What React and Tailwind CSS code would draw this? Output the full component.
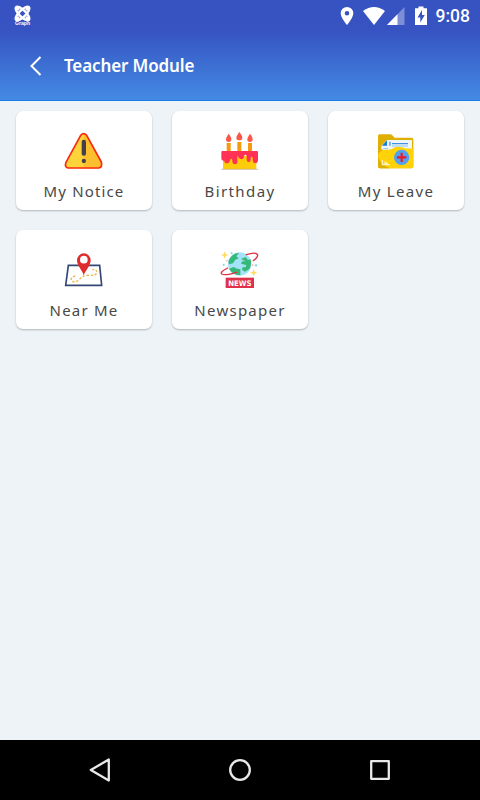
import React from 'react';

function NoticeIcon() {
  return (
    <svg className="h-10 w-10" viewBox="42 33 120 120">
      <path d="M90 47Q101 36 112 47L154 125Q160 142 147 145H54Q42 142 48 126Z" fill="#ffd43b" />
      <path d="M101 41Q108 41 112 47L154 125Q160 142 147 145H101Z" fill="#fcbf2d" />
      <path d="M92 46Q101 36 110 46L154 126Q158 142 147 144H54Q43 142 48 127Z" fill="none" stroke="#f92a13" strokeWidth="5" strokeLinejoin="round" />
      <rect x="95" y="59" width="13" height="48" rx="6" fill="#44414a" />
      <circle cx="101.500" cy="123" r="6.500" fill="#44414a" />
    </svg>
  );
}

function BirthdayIcon() {
  return (
    <svg className="h-10 w-10" viewBox="45 33 120 120">
      <path d="M65 69h12v28H65zM97 66h12v31H97zM129 69h12v28h-12z" fill="#f59a0c" />
      <path d="M71 41C77 49 79 53 79 58a8 8 0 0 1-16 0C63 53 66 49 71 41ZM103 36C109 44 112 49 112 53a9 8 0 0 1-18 0C94 48 98 44 103 36ZM135 41C141 49 143 53 143 58a8 8 0 0 1-16 0C127 53 130 49 135 41Z" fill="#fa5746" />
      <path d="M54 108H154V148H54Z" fill="#ffcc0a" />
      <path d="M52 93H156Q159 93 159 97V119Q159 129 151 129T143 119V114Q140 107 137 114V119Q137 126 131 126T125 119V108Q122 101 117 108V111Q115 119 107 117T99 108Q97 106 97 112V126Q97 133 90 133T82 126V120Q79 112 75 120Q74 130 66 130T58 122Q49 123 49 114V97Q49 93 52 93Z" fill="#ff3154" />
      <path d="M48 148H160" stroke="#b7aba4" strokeWidth="2" />
    </svg>
  );
}

function LeaveIcon() {
  return (
    <svg className="h-10 w-10" viewBox="48 33 120 120">
      <path d="M58 43H91Q96 43 99 48L104 53H154Q160 53 160 59V139Q160 145 154 145H60Q54 145 54 139V48Q54 43 58 43Z" fill="#deb006" />
      <path d="M64 88V78L81 60H156V100H100Z" fill="#edf6fb" />
      <path d="M66 77L81 61V77Z" fill="#147bd8" />
      <path d="M90 65V77M96 71H144" stroke="#4492df" strokeWidth="4" />
      <path d="M70 86H84M96 78H144" stroke="#91c6ec" strokeWidth="3" />
      <path d="M54 104Q62 88 80 89Q94 90 102 83Q112 78 126 82Q142 88 160 84V139Q160 145 154 145H60Q54 145 54 139Z" fill="#ffd20a" />
      <path d="M54 104Q56 132 90 145H60Q54 145 54 139Z" fill="#deb006" />
      <path d="M67 120V134H90M73 126H79M73 130H84" fill="none" stroke="#fff4bd" strokeWidth="3.500" />
      <circle cx="125" cy="112" r="23" fill="#51a1f0" />
      <path d="M125 98V126M111 112H139" stroke="#ef1628" strokeWidth="6.500" />
    </svg>
  );
}

function NearIcon() {
  return (
    <svg className="h-10 w-10" viewBox="42 30 120 120">
      <path d="M55 76H149L155 136H47Z" fill="white" stroke="#354875" strokeWidth="5" />
      <path d="M76 108Q61 111 64 122Q74 130 88 119Q97 107 112 106Q137 108 141 98Q140 87 127 89" fill="none" stroke="#edb94b" strokeWidth="4" strokeDasharray="7 5" />
      <path d="M101 107C98 91 81 78 81 61A20.500 21 0 0 1 122 61C122 78 106 91 101 107Z" fill="#df2b2c" />
      <circle cx="101.500" cy="59" r="11.500" fill="white" />
    </svg>
  );
}

function NewsIcon() {
  return (
    <svg className="h-10 w-10" viewBox="45 30 120 120">
      <circle cx="104" cy="72" r="35" fill="#a3e2f7" />
      <path d="M76 53Q87 38 102 39L94 49L101 55L91 59L84 70L72 73Q68 62 76 53ZM108 57L122 51L129 60L137 58Q141 74 133 87L120 95L111 89L113 82L123 81V75L108 71L112 64L122 64ZM72 86L86 81L96 86L106 88V105Q84 106 72 86Z" fill="#35b878" />
      <path d="M124 44Q154 34 158 45Q159 52 145 62M68 84Q44 96 50 102Q60 108 95 97" fill="none" stroke="#de3446" strokeWidth="4" strokeLinecap="round" />
      <path d="M59 34L62 42L70 45L62 48L59 56L56 48L48 45L56 42ZM146 87L149 95L157 98L149 101L146 109L143 101L135 98L143 95Z" fill="#ffdc5c" />
      <g fill="#82cfe9"><circle cx="80" cy="40" r="3" /><circle cx="153" cy="76" r="3.500" /><circle cx="56" cy="74" r="3" /></g>
      <g fill="#f28d98"><circle cx="66" cy="62" r="2" /><circle cx="143" cy="75" r="2" /></g>
      <rect x="62" y="113" width="85" height="31" fill="#df3149" />
      <text x="104.500" y="137" fill="white" textAnchor="middle" textLength="70" lengthAdjust="spacingAndGlyphs" className="font-['DejaVu_Sans'] text-[23px] font-bold">NEWS</text>
    </svg>
  );
}

const modules = [
  { name: 'My Notice', icon: NoticeIcon, tracking: 'tracking-[1.15px]' },
  { name: 'Birthday', icon: BirthdayIcon, tracking: 'tracking-[1.4px]' },
  { name: 'My Leave', icon: LeaveIcon, tracking: 'tracking-[1.3px]' },
  { name: 'Near Me', icon: NearIcon, tracking: 'tracking-[1.2px]' },
  { name: 'Newspaper', icon: NewsIcon, tracking: 'tracking-[1.25px]' },
];

function StatusBar() {
  return (
    <div className="flex h-8 items-center justify-between pl-[13px] pr-[10px]">
      <svg className="h-[22px] w-5" viewBox="0 0 20 22">
        <g fill="none" stroke="white" strokeWidth="2.400">
          <ellipse cx="9.500" cy="8.500" rx="3.300" ry="9" transform="rotate(45 9.500 8.500)" />
          <ellipse cx="9.500" cy="8.500" rx="3.300" ry="9" transform="rotate(-45 9.500 8.500)" />
        </g>
        <path d="M3 2l3 3M16 2l-3 3M3 15l3-3M16 15l-3-3" stroke="white" strokeWidth="2.500" />
        <text x="9.500" y="20" textAnchor="middle" textLength="15" lengthAdjust="spacingAndGlyphs" fill="white" className="font-['Liberation_Sans'] text-[6px] font-bold">Graph</text>
      </svg>
      <div className="flex items-center">
        <svg className="h-6 w-[90px]" viewBox="340 4 90 24" fill="white">
          <path fillRule="evenodd" d="M347 7A6.300 6.300 0 0 0 340.700 13.300C340.700 18 347 25 347 25S353.300 18 353.300 13.300A6.300 6.300 0 0 0 347 7ZM347 11A2.300 2.300 0 1 1 347 15.600A2.300 2.300 0 0 1 347 11Z" />
          <path d="M363 11Q374 3 385 11L374 25Z" />
          <path d="M404.500 7V25H387Z" opacity=".35" />
          <path d="M397.500 14.200V25H387Z" />
          <path fillRule="evenodd" d="M415 8.300H418.500V6.500H423.500V8.300H427V25H415ZM422 10L417.500 17.500H420.300V22.500L424.800 15H422Z" />
        </svg>
        <span className="ml-[6px] font-[Roboto,sans-serif] text-[17.5px] leading-8 font-medium">9:08</span>
      </div>
    </div>
  );
}

export default function App() {
  return (
    <div className="flex h-[800px] w-[480px] flex-col overflow-hidden bg-[#edf3f7] font-['Noto_Sans',sans-serif]">
      <header className="h-[101px] shrink-0 border-b border-[#187de5] bg-linear-to-b from-[#3653c1] from-30% to-[#448ae4] text-white">
        <StatusBar />
        <div className="flex h-[68px] items-center pl-[29px]">
          <svg className="h-6 w-4" viewBox="0 0 16 24" fill="none" stroke="white" strokeWidth="2">
            <path d="M11.500 3L2.500 12L11.500 21" />
          </svg>
          <h1 className="ml-[19px] text-[17px] font-semibold tracking-[-0.12px]">Teacher Module</h1>
        </div>
      </header>

      <main className="grid flex-1 grid-cols-3 content-start gap-5 px-4 pt-[10px]">
        {modules.map(({ name, icon: Icon, tracking }) => (
          <button key={name} className="flex h-[99px] flex-col items-center rounded-[7px] bg-white pt-5 shadow-[0_1px_2px_rgba(0,0,0,0.25)]">
            <Icon />
            <span className={`mt-2 text-[15px] leading-6 whitespace-nowrap text-[#484848] ${tracking}`}>{name}</span>
          </button>
        ))}
      </main>

      <nav className="flex h-[60px] shrink-0 items-center justify-between bg-black px-[88px]">
        <svg className="h-6 w-6" viewBox="0 0 24 24" fill="none" stroke="#e8e8e8" strokeWidth="2.300" strokeLinejoin="round">
          <path d="M20.800 1.500V22.500L2.800 12Z" />
        </svg>
        <svg className="h-6 w-6" viewBox="0 0 24 24" fill="none" stroke="#e8e8e8" strokeWidth="2.300">
          <circle cx="12" cy="12" r="9.800" />
        </svg>
        <svg className="h-6 w-6" viewBox="0 0 24 24" fill="none" stroke="#e8e8e8" strokeWidth="2.300" strokeLinejoin="round">
          <rect x="3.200" y="3.200" width="17.600" height="17.600" />
        </svg>
      </nav>
    </div>
  );
}
